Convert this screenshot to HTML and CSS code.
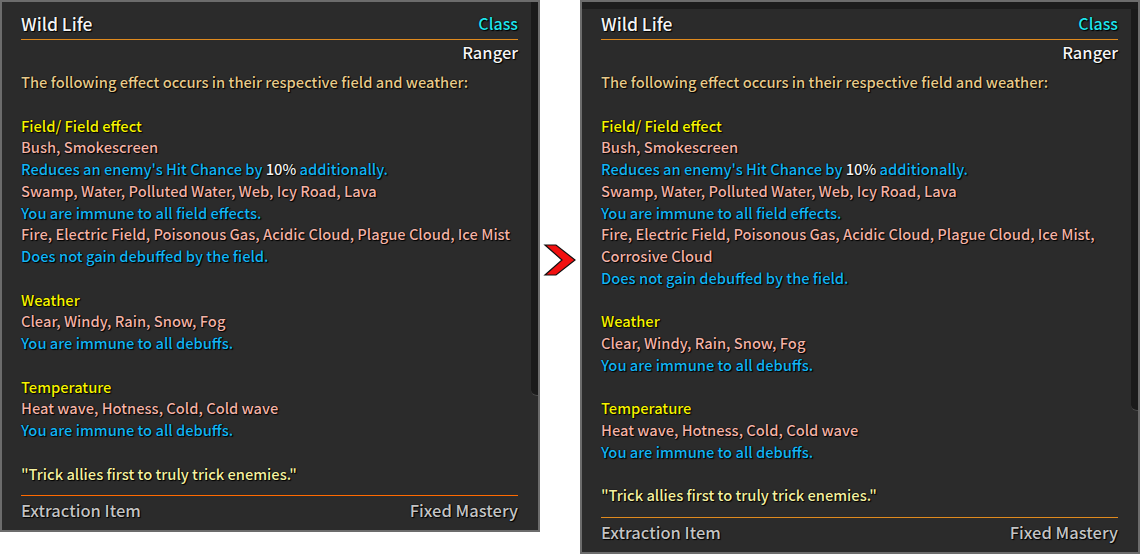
FILE: index.html
```html
<!DOCTYPE html>
<html>
<head>
<meta charset="utf-8">
<link rel="stylesheet" href="styles.css">
</head>
<body>
<div class="stage">
  <div class="panel panel-left">
    <div class="scrollbar scroll-left"></div>
    <div class="head">
      <span class="title">Wild Life</span>
      <span class="cls">Class</span>
    </div>
    <div class="sub">Ranger</div>
    <div class="body">
      <div class="intro">The following effect occurs in their respective field and weather:</div>
      <div class="blank"></div>
      <div class="hd">Field/ Field effect</div>
      <div class="pk">Bush, Smokescreen</div>
      <div class="bl">Reduces an enemy's Hit Chance by <span class="wh">10%</span> additionally.</div>
      <div class="pk">Swamp, Water, Polluted Water, Web, Icy Road, Lava</div>
      <div class="bl">You are immune to all field effects.</div>
      <div class="pk">Fire, Electric Field, Poisonous Gas, Acidic Cloud, Plague Cloud, Ice Mist</div>
      <div class="bl">Does not gain debuffed by the field.</div>
      <div class="blank"></div>
      <div class="hd">Weather</div>
      <div class="pk">Clear, Windy, Rain, Snow, Fog</div>
      <div class="bl">You are immune to all debuffs.</div>
      <div class="blank"></div>
      <div class="hd">Temperature</div>
      <div class="pk">Heat wave, Hotness, Cold, Cold wave</div>
      <div class="bl">You are immune to all debuffs.</div>
      <div class="blank"></div>
      <div class="qt">"Trick allies first to truly trick enemies."</div>
    </div>
    <div class="foot foot-red">
      <span>Extraction Item</span>
      <span>Fixed Mastery</span>
    </div>
  </div>

  <div class="arrow-col">
    <svg class="arrow" width="34" height="34" viewBox="0 0 34 34">
      <polygon points="2,1 13,1 32,16 13,31 2,31 19,16" fill="#f21010" stroke="#111" stroke-width="1.2" stroke-linejoin="miter"/>
    </svg>
  </div>

  <div class="panel panel-right">
    <div class="scrollbar scroll-right"></div>
    <div class="head">
      <span class="title">Wild Life</span>
      <span class="cls">Class</span>
    </div>
    <div class="sub">Ranger</div>
    <div class="body">
      <div class="intro">The following effect occurs in their respective field and weather:</div>
      <div class="blank"></div>
      <div class="hd">Field/ Field effect</div>
      <div class="pk">Bush, Smokescreen</div>
      <div class="bl">Reduces an enemy's Hit Chance by <span class="wh">10%</span> additionally.</div>
      <div class="pk">Swamp, Water, Polluted Water, Web, Icy Road, Lava</div>
      <div class="bl">You are immune to all field effects.</div>
      <div class="pk">Fire, Electric Field, Poisonous Gas, Acidic Cloud, Plague Cloud, Ice Mist,</div>
      <div class="pk">Corrosive Cloud</div>
      <div class="bl">Does not gain debuffed by the field.</div>
      <div class="blank"></div>
      <div class="hd">Weather</div>
      <div class="pk">Clear, Windy, Rain, Snow, Fog</div>
      <div class="bl">You are immune to all debuffs.</div>
      <div class="blank"></div>
      <div class="hd">Temperature</div>
      <div class="pk">Heat wave, Hotness, Cold, Cold wave</div>
      <div class="bl">You are immune to all debuffs.</div>
      <div class="blank"></div>
      <div class="qt">"Trick allies first to truly trick enemies."</div>
    </div>
    <div class="foot">
      <span>Extraction Item</span>
      <span>Fixed Mastery</span>
    </div>
  </div>
</div>
</body>
</html>
```

FILE: styles.css
```css
html, body {
  margin: 0;
  padding: 0;
  background: #ffffff;
}

.stage {
  display: flex;
  align-items: flex-start;
  width: 1140px;
  height: 554px;
}

.panel {
  position: relative;
  box-sizing: border-box;
  background: #2b2b2b;
  border: 2px solid #6c6c6c;
  padding: 9px 20px 0 19px;
  font-family: "Noto Sans CJK KR", "Noto Sans", sans-serif;
  font-weight: 500;
  color: #e8e8e8;
  text-shadow: 0 0 1px #000, 0 0 1px #000, 1px 1px 1px #000;
}

.panel-left {
  width: 540px;
  height: 532px;
}

.panel-right {
  width: 560px;
  height: 554px;
  box-shadow: inset 0 7px 0 #1d1d1d;
}

.scrollbar {
  position: absolute;
  right: 0;
  width: 7px;
  background: #1a1a1a;
  border-bottom-left-radius: 6px;
  border-bottom: 1px solid #4a4a4a;
}

.scroll-left {
  top: 0;
  height: 393px;
}

.scroll-right {
  top: 7px;
  height: 401px;
}

.head {
  display: flex;
  justify-content: space-between;
  align-items: center;
  height: 24px;
  padding-bottom: 4px;
  border-bottom: 1px solid #e08a1e;
}

.title {
  font-size: 17.5px;
  color: #f4f4f4;
}

.cls {
  font-size: 16px;
  color: #20e4ec;
}

.sub {
  margin-top: 1px;
  height: 22px;
  line-height: 22px;
  text-align: right;
  font-size: 16.5px;
  color: #f4f4f4;
}

.body {
  margin-top: 8px;
  font-size: 14.7px;
  line-height: 21.75px;
}

.body > div {
  height: 21.75px;
  white-space: nowrap;
}

.intro { color: #e6c98a; }
.hd { color: #f6f200; }
.pk { color: #f2b2a6; }
.bl { color: #14b4f2; }
.wh { color: #f6f6f6; }
.qt { color: #f4f0a0; }

.foot {
  margin-top: 11px;
  border-top: 1px solid #e08a1e;
  padding-top: 3px;
  display: flex;
  justify-content: space-between;
  height: 22px;
  line-height: 22px;
  font-size: 16.5px;
  color: #c4c4c4;
}

.foot-red {
  border-top-color: #ff6a00;
}

.arrow-col {
  width: 40px;
  height: 532px;
  display: flex;
  align-items: center;
  justify-content: center;
}

.arrow {
  display: block;
  margin-top: -11px;
}
```
